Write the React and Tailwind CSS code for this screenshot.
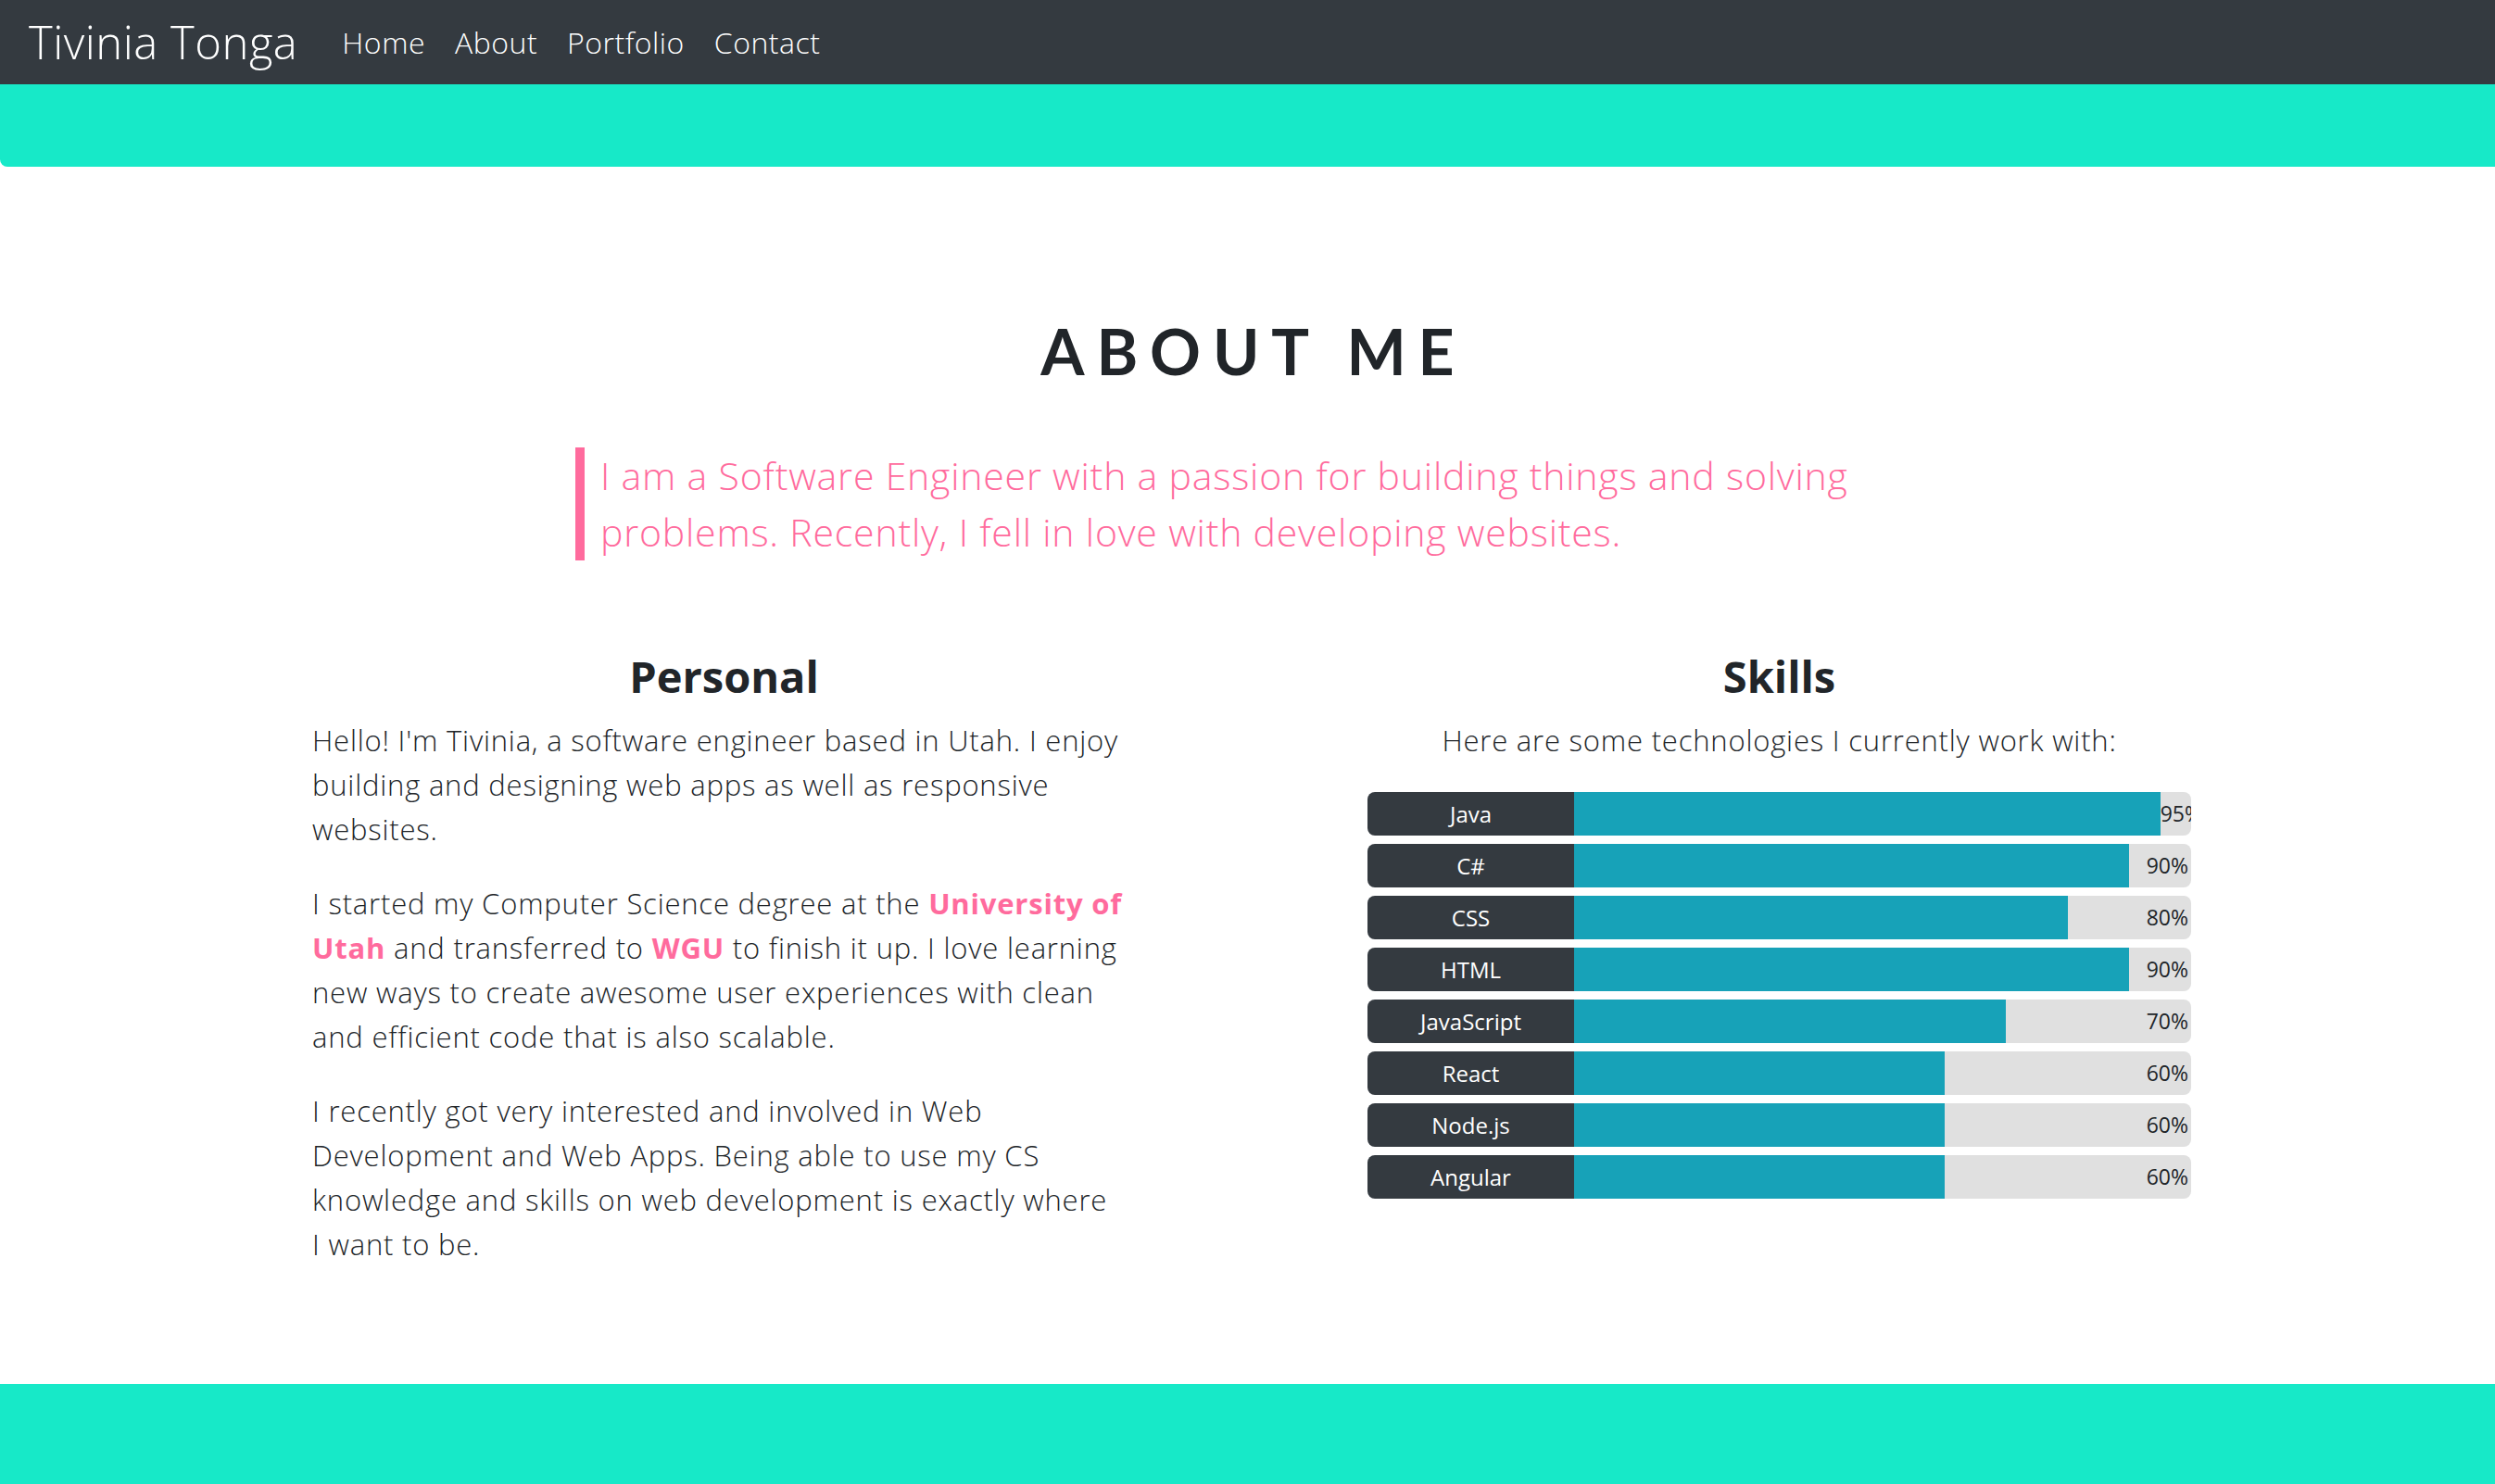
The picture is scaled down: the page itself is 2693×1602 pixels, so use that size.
const skills = [
  { name: 'Java', level: 95 },
  { name: 'C#', level: 90 },
  { name: 'CSS', level: 80 },
  { name: 'HTML', level: 90 },
  { name: 'JavaScript', level: 70 },
  { name: 'React', level: 60 },
  { name: 'Node.js', level: 60 },
  { name: 'Angular', level: 60 },
];

const navLinks = ['Home', 'About', 'Portfolio', 'Contact'];

const SkillBar = ({ name, level }) => (
  <div className="flex h-[47px] rounded-[8px] overflow-hidden">
    <div className="w-[223px] shrink-0 bg-[#343a40] text-white text-[24px] flex items-center justify-center">
      {name}
    </div>
    <div className="flex-1 flex bg-[#e0e0e0] min-w-0">
      <div className="bg-[#17a2b8] h-full" style={{ width: `${level}%` }} />
      <div className="flex-1 min-w-0 text-right pr-[3px] whitespace-nowrap text-[23px] leading-[47px] text-[#212529]">
        {level}%
      </div>
    </div>
  </div>
);

export default function App() {
  return (
    <div className="min-h-screen flex flex-col bg-white text-[#212529] font-['Open_Sans','Lato',sans-serif]">
      {/* Navbar */}
      <nav className="h-[91px] bg-[#343a40] flex items-center px-[31px]">
        <a href="#" className="text-white text-[49px] font-light tracking-[0.5px] mr-[32px] leading-none">
          Tivinia Tonga
        </a>
        <div className="flex items-center">
          {navLinks.map((link) => (
            <a key={link} href="#" className="text-white text-[32px] font-light tracking-[0.5px] px-[16px] leading-none">
              {link}
            </a>
          ))}
        </div>
      </nav>

      {/* Header band */}
      <div className="h-[89px] bg-[#17e9c8] rounded-bl-[8px]" />

      {/* About */}
      <main className="flex-1">
        <h1 className="mt-[159px] text-center text-[68px] leading-[80px] font-bold tracking-[0.19em] pl-[0.19em] text-[#212529] font-['Lato',sans-serif]">
          ABOUT ME
        </h1>

        <blockquote className="mt-[64px] mx-auto w-[1451px] border-l-[10px] border-[#ff6b9d] pl-[17px] text-[41px] leading-[61px] font-light tracking-[0.8px] text-[#ff6b9d]">
          I am a Software Engineer with a passion for building things and solving problems. Recently, I fell in love with developing websites.
        </blockquote>

        <div className="mt-[96px] ml-[337px] w-[2028px] grid grid-cols-2 gap-x-[250px]">
          {/* Personal */}
          <section>
            <h2 className="text-center text-[47px] leading-[58px] font-bold">Personal</h2>
            <div className="mt-[16px] text-[31px] leading-[48px] font-light tracking-[0.8px]">
              <p className="mb-[32px]">
                Hello! I'm Tivinia, a software engineer based in Utah. I enjoy building and designing web apps as well as responsive websites.
              </p>
              <p className="mb-[32px]">
                I started my Computer Science degree at the{' '}
                <a href="#" className="font-bold text-[#ff6b9d]">University of Utah</a> and transferred to{' '}
                <a href="#" className="font-bold text-[#ff6b9d]">WGU</a> to finish it up. I love learning new ways to create awesome user experiences with clean and efficient code that is also scalable.
              </p>
              <p className="mb-[32px]">
                I recently got very interested and involved in Web Development and Web Apps. Being able to use my CS knowledge and skills on web development is exactly where I{'\u00a0'}want to be.
              </p>
            </div>
          </section>

          {/* Skills */}
          <section>
            <h2 className="text-center text-[47px] leading-[58px] font-bold">Skills</h2>
            <p className="mt-[16px] text-center text-[31px] leading-[48px] font-light tracking-[0.8px]">
              Here are some technologies I currently work with:
            </p>
            <div className="mt-[32px] flex flex-col gap-[9px]">
              {skills.map((s) => (
                <SkillBar key={s.name} name={s.name} level={s.level} />
              ))}
            </div>
          </section>
        </div>
      </main>

      {/* Footer band */}
      <footer className="h-[108px] bg-[#17e9c8]" />
    </div>
  );
}
